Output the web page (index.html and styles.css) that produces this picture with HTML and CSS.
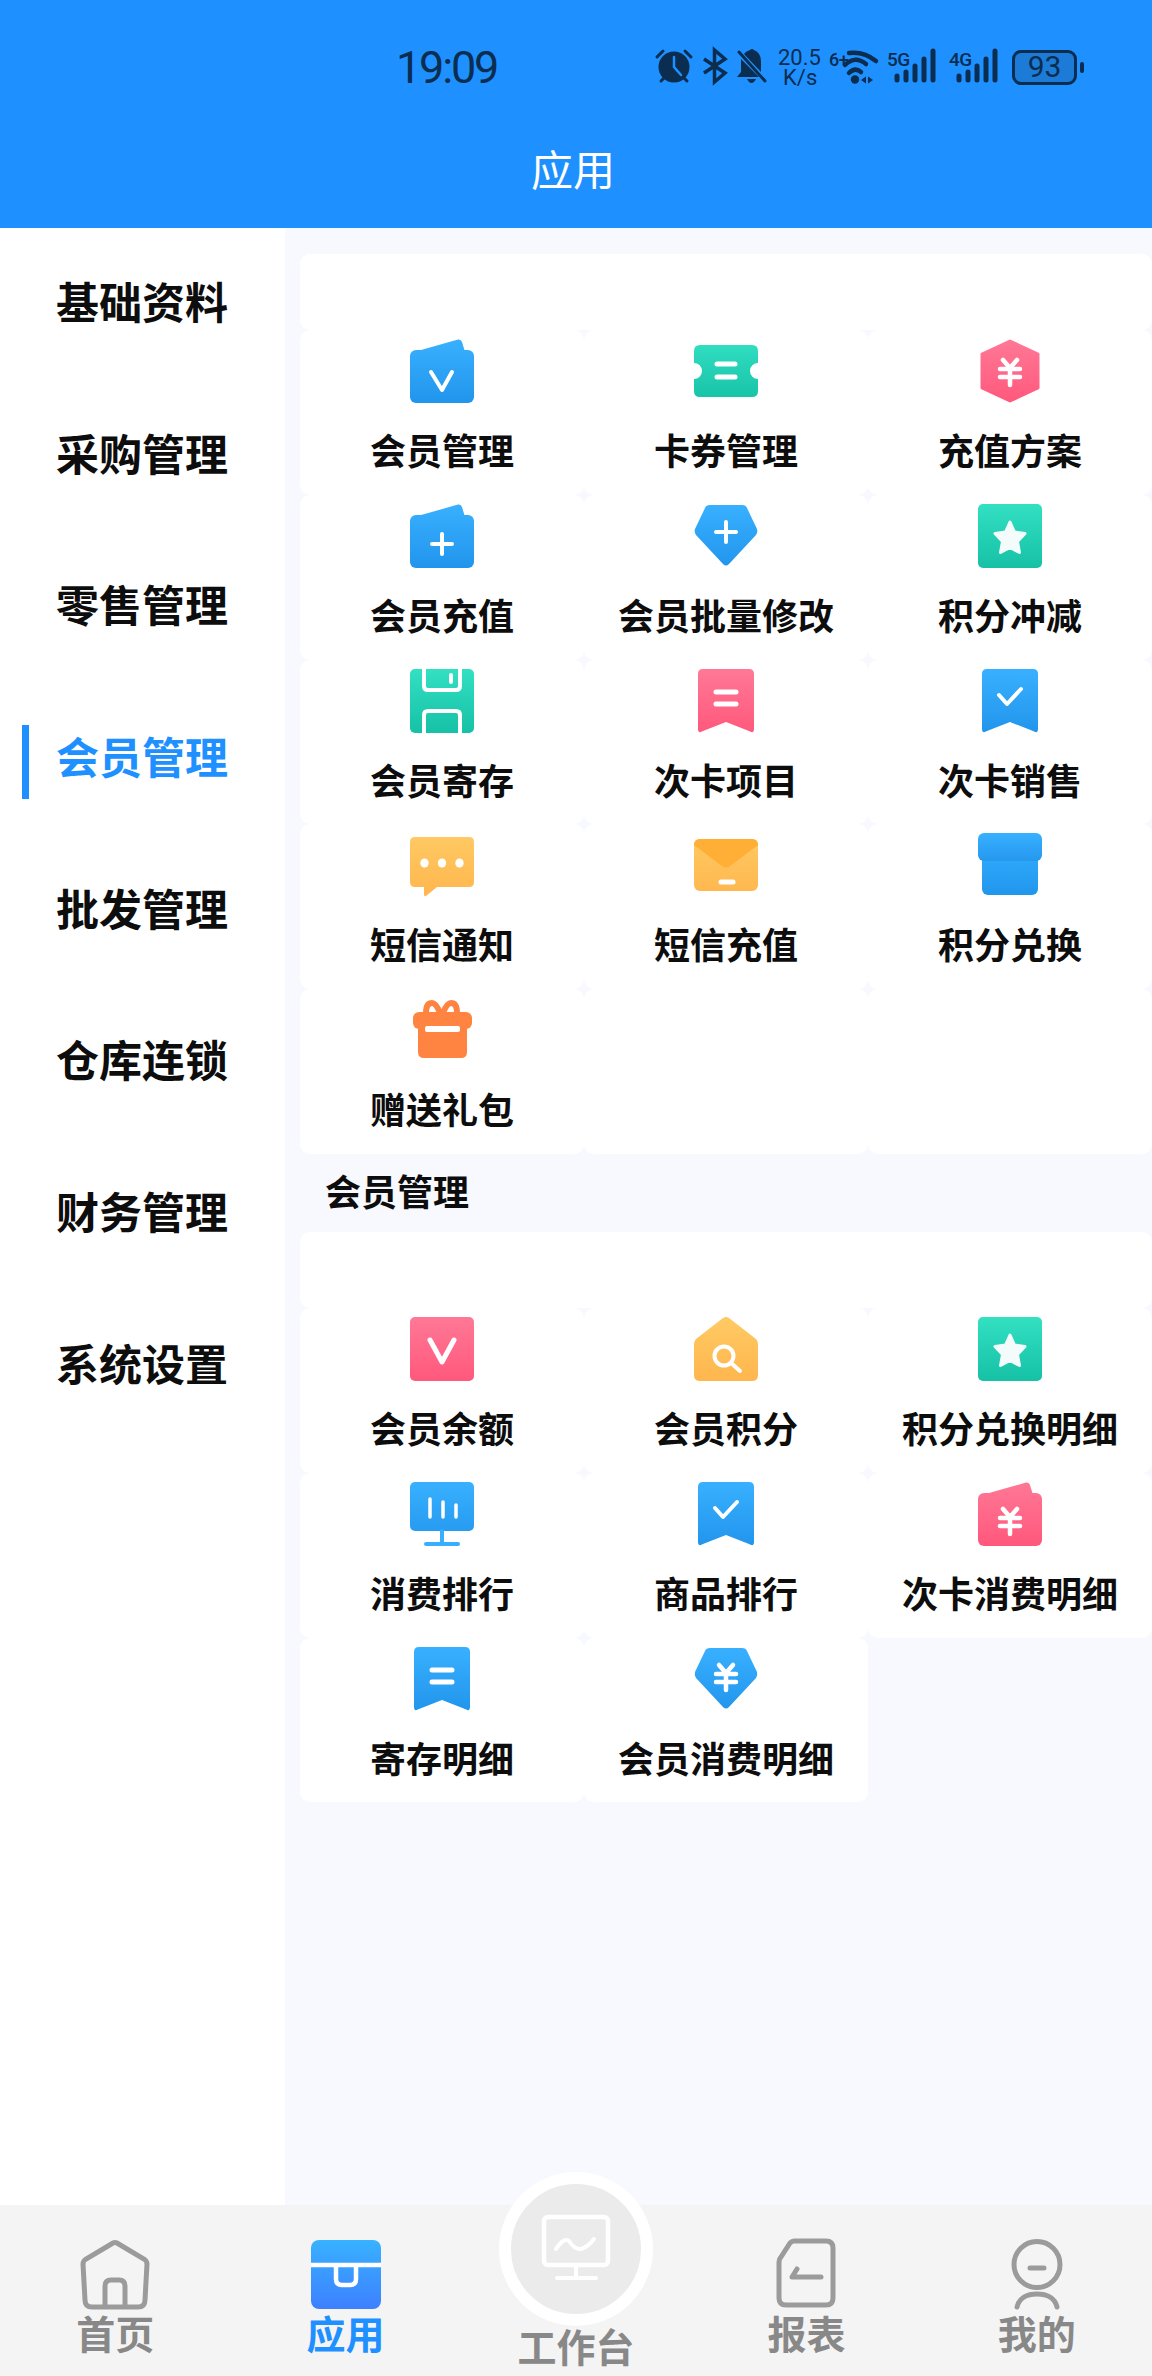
FILE: index.html
```html
<!DOCTYPE html>
<html lang="zh-CN">
<head>
    <meta charset="UTF-8">
    <meta name="viewport" content="width=device-width, initial-scale=1.0">
    <title>应用</title>
    <link rel="stylesheet" href="styles.css">
</head>
<body>
    <svg class="defs" xmlns="http://www.w3.org/2000/svg">
        <defs>
            <linearGradient id="g-blue" gradientUnits="userSpaceOnUse" x1="0" y1="0" x2="0" y2="64"><stop offset="0" stop-color="#39b0ff"/><stop offset="1" stop-color="#2195ec"/></linearGradient>
            <linearGradient id="g-lid" gradientUnits="userSpaceOnUse" x1="0" y1="0" x2="0" y2="28"><stop offset="0" stop-color="#39b0ff"/><stop offset="1" stop-color="#2598ee"/></linearGradient>
            <linearGradient id="g-body" gradientUnits="userSpaceOnUse" x1="0" y1="27" x2="0" y2="62"><stop offset="0" stop-color="#2da7fa"/><stop offset="1" stop-color="#2196ec"/></linearGradient>
            <linearGradient id="g-teal" gradientUnits="userSpaceOnUse" x1="0" y1="0" x2="0" y2="64"><stop offset="0" stop-color="#33e0c2"/><stop offset="1" stop-color="#16c1a6"/></linearGradient>
            <linearGradient id="g-pink" gradientUnits="userSpaceOnUse" x1="0" y1="0" x2="0" y2="64"><stop offset="0" stop-color="#ff7896"/><stop offset="1" stop-color="#ff587c"/></linearGradient>
            <linearGradient id="g-amber" gradientUnits="userSpaceOnUse" x1="0" y1="0" x2="0" y2="64"><stop offset="0" stop-color="#ffca64"/><stop offset="1" stop-color="#ffb64e"/></linearGradient>
            <linearGradient id="g-app" gradientUnits="userSpaceOnUse" x1="0" y1="0" x2="0" y2="70"><stop offset="0" stop-color="#38b2ff"/><stop offset="1" stop-color="#3d7fff"/></linearGradient>
        </defs>

        <!-- grid icons, all 64 x 64 -->
        <symbol id="i-card-v" viewBox="0 0 64 64">
            <path fill="url(#g-blue)" d="M4 13 48 .6Q51 0 52 3L55 13Z"/>
            <rect y="11" width="64" height="53" rx="6" fill="url(#g-blue)"/>
            <path class="w" stroke-width="4" d="M21 33 32 51 42 33"/>
        </symbol>
        <symbol id="i-card-plus" viewBox="0 0 64 64">
            <path fill="url(#g-blue)" d="M4 13 48 .6Q51 0 52 3L55 13Z"/>
            <rect y="11" width="64" height="53" rx="6" fill="url(#g-blue)"/>
            <path class="w" stroke-width="4" d="M22 40H42M32 30V50"/>
        </symbol>
        <symbol id="i-card-yen" viewBox="0 0 64 64">
            <path fill="url(#g-pink)" d="M4 13 48 .6Q51 0 52 3L55 13Z"/>
            <rect y="11" width="64" height="53" rx="6" fill="url(#g-pink)"/>
            <path class="w" stroke-width="4.500" d="M25 27 32 35 39 27M22 36H42M22 44H42M32 35V52"/>
        </symbol>
        <symbol id="i-ticket" viewBox="0 0 64 64">
            <path fill="url(#g-teal)" d="M6 6H58Q64 6 64 12V24A8 8 0 0 0 64 40V52Q64 58 58 58H6Q0 58 0 52V40A8 8 0 0 0 0 24V12Q0 6 6 6Z"/>
            <path class="w" stroke-width="5" d="M23 25H41M23 38H41"/>
        </symbol>
        <symbol id="i-hex" viewBox="0 0 64 64">
            <path fill="url(#g-pink)" stroke="url(#g-pink)" stroke-width="3" stroke-linejoin="round" d="M32 2 60 15V49L32 62 4 49V15Z"/>
            <path class="w" stroke-width="4.500" d="M25 21 32 29 39 21M22 30H42M22 38H42M32 29V46"/>
        </symbol>
        <symbol id="i-pen-plus" viewBox="0 0 64 64">
            <path fill="url(#g-blue)" d="M16 1H48Q52 1 53 4L63 25Q64 28 62 31L35 60Q32 63 29 60L2 31Q0 28 1 25L11 4Q12 1 16 1Z"/>
            <path class="w" stroke-width="4" d="M22 28H42M32 18V38"/>
        </symbol>
        <symbol id="i-pen-yen" viewBox="0 0 64 64">
            <path fill="url(#g-blue)" d="M16 1H48Q52 1 53 4L63 25Q64 28 62 31L35 60Q32 63 29 60L2 31Q0 28 1 25L11 4Q12 1 16 1Z"/>
            <path class="w" stroke-width="4.500" d="M25 18 32 26 39 18M22 27H42M22 35H42M32 26V43"/>
        </symbol>
        <symbol id="i-star" viewBox="0 0 64 64">
            <rect width="64" height="64" rx="5" fill="url(#g-teal)"/>
            <path fill="#f4fcfb" stroke="#f4fcfb" stroke-width="3" stroke-linejoin="round" d="M32 18 36.500 28 47 29.500 39.500 37.500 41.500 48.500 32 43.500 22.500 48.500 24.500 37.500 17 29.500 27.500 28Z"/>
        </symbol>
        <symbol id="i-floppy" viewBox="0 0 64 64">
            <rect width="64" height="64" rx="5" fill="url(#g-teal)"/>
            <path class="w" stroke-width="4" d="M14 0V17Q14 21 18 21H46Q50 21 50 17V0M14 64V46Q14 42 18 42H46Q50 42 50 46V64M41 6V13"/>
        </symbol>
        <symbol id="i-mark-pink" viewBox="0 0 64 64">
            <path fill="url(#g-pink)" d="M9 0H55Q60 0 60 5V60Q60 65 55 62L32 53 9 62Q4 65 4 60V5Q4 0 9 0Z"/>
            <path class="w" stroke-width="5" d="M22 23H42M22 35H42"/>
        </symbol>
        <symbol id="i-mark-blue" viewBox="0 0 64 64">
            <path fill="url(#g-blue)" d="M9 0H55Q60 0 60 5V60Q60 65 55 62L32 53 9 62Q4 65 4 60V5Q4 0 9 0Z"/>
            <path class="w" stroke-width="4" d="M21 26 29 35 43 20"/>
        </symbol>
        <symbol id="i-mark-dash" viewBox="0 0 64 64">
            <path fill="url(#g-blue)" d="M9 0H55Q60 0 60 5V60Q60 65 55 62L32 53 9 62Q4 65 4 60V5Q4 0 9 0Z"/>
            <path class="w" stroke-width="5" d="M22 23H42M22 35H42"/>
        </symbol>
        <symbol id="i-chat" viewBox="0 0 64 64">
            <path fill="url(#g-amber)" d="M5 4H59Q64 4 64 9V49Q64 54 59 54H27L16 63Q14 64 14 61V54H5Q0 54 0 49V9Q0 4 5 4Z"/>
            <ellipse cx="14.500" cy="30" rx="4.200" ry="4.500" fill="#fff"/>
            <ellipse cx="32" cy="30" rx="4.200" ry="4.500" fill="#fff"/>
            <ellipse cx="49.500" cy="30" rx="4.200" ry="4.500" fill="#fff"/>
        </symbol>
        <symbol id="i-mail" viewBox="0 0 64 64">
            <rect y="6" width="64" height="52" rx="6" fill="url(#g-amber)"/>
            <path fill="#ffae36" d="M6 6H58Q64 6 64 12L36 33Q32 36 28 33L0 12Q0 6 6 6Z"/>
            <path class="w" stroke-width="5" d="M27 49H39"/>
        </symbol>
        <symbol id="i-box" viewBox="0 0 64 64">
            <rect x="4" y="20" width="56" height="42" rx="6" fill="url(#g-body)"/>
            <rect width="64" height="28" rx="6" fill="url(#g-lid)"/>
        </symbol>
        <symbol id="i-gift" viewBox="0 0 64 64">
            <path fill="none" stroke="#ff8442" stroke-width="6" d="M30 15Q26 5 22 5 16 5 16 15M33 15Q37 5 41 5 47 5 47 15"/>
            <path fill="#ff8442" d="M8 26H57V54Q57 60 51 60H14Q8 60 8 54Z"/>
            <rect x="3" y="14" width="59" height="17" rx="6" fill="#ff8442"/>
            <rect x="15" y="28" width="35" height="6" rx="2" fill="#fff"/>
        </symbol>
        <symbol id="i-rect-v" viewBox="0 0 64 64">
            <rect width="64" height="64" rx="5" fill="url(#g-pink)"/>
            <path class="w" stroke-width="5" d="M20 23 32 45 44 23"/>
        </symbol>
        <symbol id="i-search" viewBox="0 0 64 64">
            <path fill="url(#g-amber)" d="M29 1Q32 -1 35 1L62 22Q64 24 64 27V58Q64 64 58 64H6Q0 64 0 58V27Q0 24 2 22Z"/>
            <circle cx="30" cy="39" r="9.500" fill="none" stroke="#fff" stroke-width="4"/>
            <path class="w" stroke-width="4" d="M37 46 46 54"/>
        </symbol>
        <symbol id="i-screen" viewBox="0 0 64 64">
            <rect width="64" height="49" rx="5" fill="url(#g-blue)"/>
            <path fill="none" stroke="#38aeff" stroke-width="4" stroke-linecap="round" d="M32 49V61M16 62H48"/>
            <path class="w" stroke-width="3.500" d="M20 17V35M33 20V35M46 23V35"/>
        </symbol>
    </svg>

    <div class="page">
        <header class="top">
            <div class="status">
                <div class="clock-box"><span class="clock">19:09</span></div>
                <svg class="st" width="38" height="36" viewBox="0 0 38 36">
                    <circle cx="19" cy="19" r="15.500" fill="#0a2d50"/>
                    <path fill="none" stroke="#1e90ff" stroke-width="2.500" stroke-linecap="round" d="M19 9V19L26 27"/>
                    <path fill="none" stroke="#0a2d50" stroke-width="3" stroke-linecap="round" d="M2 9 8 3M36 9 30 3M6 33 9 30M32 33 29 30"/>
                </svg>
                <svg class="st" width="25" height="36" viewBox="0 0 25 36">
                    <path fill="none" stroke="#0a2d50" stroke-width="3.500" d="M2 11 23 25 12.500 34V2L23 11 2 25"/>
                </svg>
                <svg class="st" width="31" height="36" viewBox="0 0 31 36">
                    <path fill="#0a2d50" d="M14 2Q16 0 18 2 25 5 25 13V24L8 6Q10 3 14 2ZM5 11 23 29H1L5 24ZM11 31H20Q18 35 15.500 35 13 35 11 31Z"/>
                    <path stroke="#0a2d50" stroke-width="3" stroke-linecap="round" d="M3 4 29 33"/>
                </svg>
                <div class="speed"><span>20.5</span><span>K/s</span></div>
                <div class="net-wifi">
                    <span class="net six">6+</span>
                    <svg class="net-ic" width="48" height="38" viewBox="0 0 48 38">
                        <path fill="none" stroke="#0a2d50" stroke-width="4.500" stroke-linecap="round" d="M20 5Q35 3 47 13M16 17Q26 7 37 16M20 25Q26 19 32 24"/>
                        <circle cx="26" cy="31.500" r="4.200" fill="#0a2d50"/>
                        <path fill="#0a2d50" d="M32 32 37 28.500V35.500ZM39 28.500 44 32 39 35.500Z"/>
                    </svg>
                </div>
                <div class="net-sig">
                    <span class="net">5G</span>
                    <svg class="net-ic" width="50" height="36" viewBox="0 0 50 36">
                        <path class="bars" d="M10 28V32M19 24V32M28 18V32M37 11V32M46 3V32"/>
                    </svg>
                </div>
                <div class="net-sig">
                    <span class="net">4G</span>
                    <svg class="net-ic" width="50" height="36" viewBox="0 0 50 36">
                        <path class="bars" d="M10 28V32M19 24V32M28 18V32M37 11V32M46 3V32"/>
                    </svg>
                </div>
                <div class="battery">
                    <div class="battery-body">93</div>
                    <div class="battery-tip"></div>
                </div>
            </div>
            <div class="title">应用</div>
        </header>

        <main class="main">
            <nav class="side">
                <div class="side-item">基础资料</div>
                <div class="side-item">采购管理</div>
                <div class="side-item">零售管理</div>
                <div class="side-item active">会员管理</div>
                <div class="side-item">批发管理</div>
                <div class="side-item">仓库连锁</div>
                <div class="side-item">财务管理</div>
                <div class="side-item">系统设置</div>
            </nav>

            <section class="content">
                <div class="group-head"></div>
                <div class="grid">
                    <div class="cell"><svg class="ic"><use href="#i-card-v"/></svg><span class="label">会员管理</span></div>
                    <div class="cell"><svg class="ic"><use href="#i-ticket"/></svg><span class="label">卡券管理</span></div>
                    <div class="cell"><svg class="ic"><use href="#i-hex"/></svg><span class="label">充值方案</span></div>
                    <div class="cell"><svg class="ic"><use href="#i-card-plus"/></svg><span class="label">会员充值</span></div>
                    <div class="cell"><svg class="ic"><use href="#i-pen-plus"/></svg><span class="label">会员批量修改</span></div>
                    <div class="cell"><svg class="ic"><use href="#i-star"/></svg><span class="label">积分冲减</span></div>
                    <div class="cell"><svg class="ic"><use href="#i-floppy"/></svg><span class="label">会员寄存</span></div>
                    <div class="cell"><svg class="ic"><use href="#i-mark-pink"/></svg><span class="label">次卡项目</span></div>
                    <div class="cell"><svg class="ic"><use href="#i-mark-blue"/></svg><span class="label">次卡销售</span></div>
                    <div class="cell"><svg class="ic"><use href="#i-chat"/></svg><span class="label">短信通知</span></div>
                    <div class="cell"><svg class="ic"><use href="#i-mail"/></svg><span class="label">短信充值</span></div>
                    <div class="cell"><svg class="ic"><use href="#i-box"/></svg><span class="label">积分兑换</span></div>
                    <div class="cell"><svg class="ic"><use href="#i-gift"/></svg><span class="label">赠送礼包</span></div>
                    <div class="cell"></div>
                    <div class="cell"></div>
                </div>

                <div class="section-name">会员管理</div>
                <div class="group-head"></div>
                <div class="grid">
                    <div class="cell"><svg class="ic"><use href="#i-rect-v"/></svg><span class="label">会员余额</span></div>
                    <div class="cell"><svg class="ic"><use href="#i-search"/></svg><span class="label">会员积分</span></div>
                    <div class="cell"><svg class="ic"><use href="#i-star"/></svg><span class="label">积分兑换明细</span></div>
                    <div class="cell"><svg class="ic"><use href="#i-screen"/></svg><span class="label">消费排行</span></div>
                    <div class="cell"><svg class="ic"><use href="#i-mark-blue"/></svg><span class="label">商品排行</span></div>
                    <div class="cell"><svg class="ic"><use href="#i-card-yen"/></svg><span class="label">次卡消费明细</span></div>
                    <div class="cell"><svg class="ic"><use href="#i-mark-dash"/></svg><span class="label">寄存明细</span></div>
                    <div class="cell"><svg class="ic"><use href="#i-pen-yen"/></svg><span class="label">会员消费明细</span></div>
                </div>
            </section>
        </main>

        <footer class="tabs">
            <div class="tab">
                <svg class="tab-ic" viewBox="0 0 70 70">
                    <path class="g" d="M33 3Q35 2 37 3L64 19Q67 21 67 24L65 60Q65 67 58 67H12Q5 67 5 60L3 24Q3 21 6 19Z"/>
                    <path class="g" d="M25 66V46Q25 40 31 40H39Q45 40 45 46V66"/>
                </svg>
                <span class="tab-label">首页</span>
            </div>
            <div class="tab on">
                <svg class="tab-ic" viewBox="0 0 70 70">
                    <rect width="70" height="69" rx="8" fill="url(#g-app)"/>
                    <path fill="none" stroke="#fff" stroke-width="4.500" d="M0 25H70M25 25V39Q25 45 31 45H39Q45 45 45 39V25"/>
                </svg>
                <span class="tab-label">应用</span>
            </div>
            <div class="tab center">
                <div class="round">
                    <svg class="round-ic" viewBox="0 0 70 70">
                        <rect x="3" y="2" width="64" height="48" rx="4" fill="none" stroke="#fff" stroke-width="4.500"/>
                        <path fill="none" stroke="#fff" stroke-width="4" stroke-linecap="round" d="M15 34Q23 22 28 26 34 35 40 34 47 32 53 24M35 50V62M16 63H55"/>
                    </svg>
                </div>
                <span class="tab-label">工作台</span>
            </div>
            <div class="tab">
                <svg class="tab-ic" viewBox="0 0 70 70">
                    <path class="g" d="M23 1H55Q62 1 62 8V58Q62 65 55 65H15Q8 65 8 58V22Q8 19 10 17L19 3Q21 1 23 1Z"/>
                    <path class="g" stroke-linecap="round" stroke-linejoin="round" d="M50 37H21L26 29"/>
                </svg>
                <span class="tab-label">报表</span>
            </div>
            <div class="tab">
                <svg class="tab-ic" viewBox="0 0 70 70">
                    <circle class="g" cx="35" cy="24.500" r="23"/>
                    <path class="g" stroke-linecap="round" d="M28 28H42M15 67C17 58 25 54 35 54 45 54 53 58 55 67"/>
                </svg>
                <span class="tab-label">我的</span>
            </div>
        </footer>
    </div>
</body>
</html>
```

FILE: styles.css
```css
* {
    box-sizing: border-box;
}
body {
    margin: 0;
    font-family: "Noto Sans CJK SC", "Noto Sans", sans-serif;
    background-color: #f4f4f4;
}
.defs {
    position: absolute;
    width: 0;
    height: 0;
}
.w {
    fill: none;
    stroke: #fff;
    stroke-linecap: round;
    stroke-linejoin: round;
}
.page {
    width: 1152px;
    height: 2376px;
    display: flex;
    flex-direction: column;
    overflow: hidden;
}

/* blue top area */
.top {
    height: 228px;
    flex: none;
    background-color: #1e90ff;
}
.status {
    display: flex;
    align-items: flex-start;
    padding: 48px 0 0 396px;
    color: #0a2d50;
}
.clock-box {
    width: 259px;
    flex: none;
}
.clock {
    font-family: Roboto, sans-serif;
    font-size: 45px;
    line-height: 40px;
    letter-spacing: -2.200px;
}
.st {
    flex: none;
    display: block;
    margin-right: 9px;
    overflow: visible;
}
.speed {
    width: 51px;
    flex: none;
    margin-left: 2px;
    display: flex;
    flex-direction: column;
    align-items: flex-start;
    font-family: Roboto, sans-serif;
    font-size: 22px;
    line-height: 20px;
}
.speed span:last-child {
    margin-left: 5px;
}
.net-wifi,
.net-sig {
    position: relative;
    flex: none;
    height: 38px;
}
.net-wifi {
    width: 48px;
    margin-right: 10px;
}
.net-sig {
    width: 50px;
    margin-right: 12px;
}
.net-ic {
    display: block;
    overflow: visible;
}
.net {
    position: absolute;
    left: 0;
    top: 2px;
    font-family: Roboto, sans-serif;
    font-weight: 500;
    font-size: 19px;
    line-height: 20px;
    letter-spacing: -0.5px;
}
.six {
    font-size: 18px;
}
.bars {
    fill: none;
    stroke: #0a2d50;
    stroke-width: 5;
    stroke-linecap: round;
}
.battery {
    display: flex;
    align-items: center;
    margin: 2px 0 0 1px;
}
.battery-body {
    width: 65px;
    height: 35px;
    border: 3px solid #0a2d50;
    border-radius: 9px;
    background-color: #1c7bd6;
    font-family: Roboto, sans-serif;
    font-size: 30px;
    line-height: 28px;
    text-align: center;
}
.battery-tip {
    width: 4px;
    height: 11px;
    margin-left: 3px;
    border-radius: 2px;
    background-color: #0a2d50;
}
.title {
    margin-top: 52px;
    padding-right: 6px;
    text-align: center;
    color: #fff;
    font-size: 42px;
    line-height: 56px;
}

/* sidebar + list */
.main {
    flex: 1;
    min-height: 0;
    display: flex;
}
.side {
    width: 285px;
    flex: none;
    background-color: #fff;
}
.side-item {
    position: relative;
    height: 151.700px;
    padding-left: 56px;
    font-size: 43px;
    font-weight: 700;
    line-height: 144px;
    color: #0d0d0d;
}
.side-item.active {
    color: #1e90ff;
}
.side-item.active::before {
    content: "";
    position: absolute;
    left: 22px;
    top: 42px;
    width: 7px;
    height: 74px;
    background-color: #1e90ff;
}
.content {
    flex: 1;
    padding: 26px 0 0 15px;
    background-color: #f8f9ff;
}
.group-head {
    height: 76px;
    background-color: #fff;
    border-radius: 10px;
}
.grid {
    display: grid;
    grid-template-columns: repeat(3, 284px);
    grid-auto-rows: 164.800px;
}
.cell {
    display: flex;
    flex-direction: column;
    align-items: center;
    padding-top: 9px;
    background-color: #fff;
    border-radius: 10px;
}
.ic {
    width: 64px;
    height: 64px;
    flex: none;
    overflow: visible;
}
.label {
    margin-top: 21px;
    font-size: 36px;
    font-weight: 700;
    line-height: 50px;
    color: #0d0d0d;
}
.section-name {
    height: 78px;
    padding-left: 25px;
    font-size: 36px;
    font-weight: 700;
    line-height: 72px;
    color: #0d0d0d;
}

/* bottom tabs */
.tabs {
    height: 171px;
    flex: none;
    display: grid;
    grid-template-columns: repeat(5, 1fr);
    background-color: #f4f4f4;
}
.tab {
    display: flex;
    flex-direction: column;
    align-items: center;
    padding-top: 35px;
}
.tab-ic {
    width: 70px;
    height: 70px;
    flex: none;
    overflow: visible;
}
.g {
    fill: none;
    stroke: #9b9b9b;
    stroke-width: 5;
}
.tab-label {
    margin-top: 0;
    font-size: 39px;
    font-weight: 700;
    line-height: 44px;
    color: #888;
}
.tab.on .tab-label {
    color: #1e90ff;
}
.tab.center {
    padding-top: 0;
}
.round {
    width: 154px;
    height: 154px;
    flex: none;
    margin-top: -33px;
    display: flex;
    align-items: center;
    justify-content: center;
    background-color: #ebebeb;
    border: 12px solid #fff;
    border-radius: 50%;
    position: relative;
}
.round-ic {
    width: 70px;
    height: 70px;
    margin-top: 1px;
    overflow: visible;
}
.tab.center .tab-label {
    margin-top: -3px;
}
```
